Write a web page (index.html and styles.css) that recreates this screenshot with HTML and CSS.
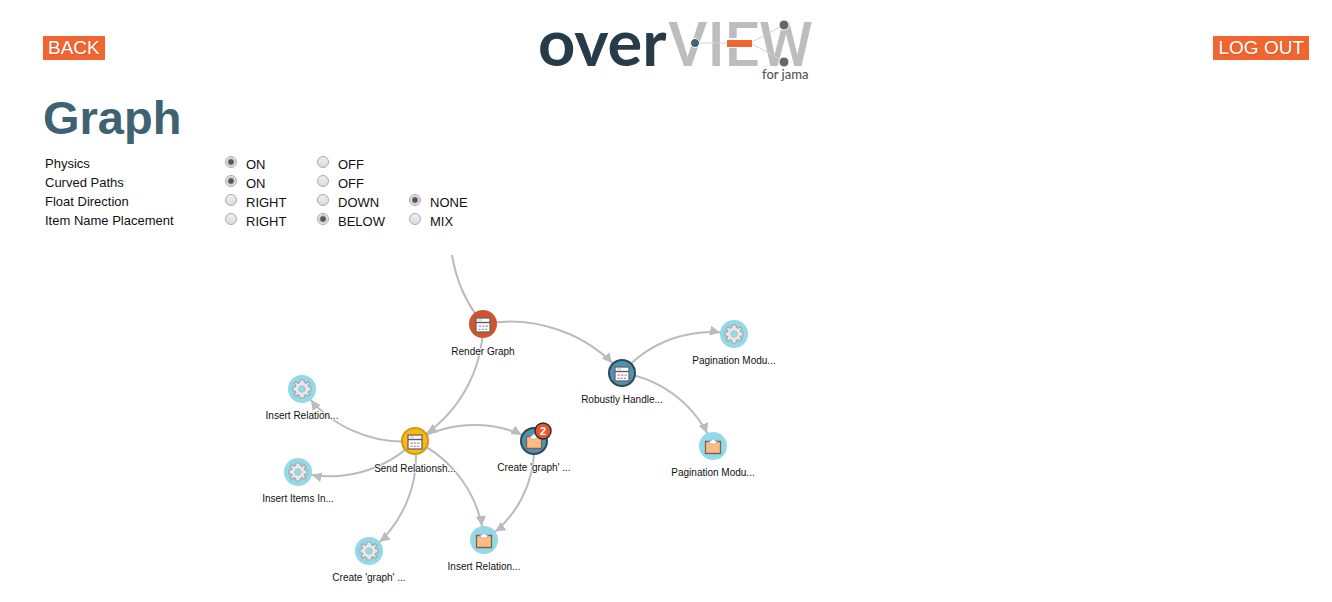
FILE: index.html
```html
<!DOCTYPE html>
<html lang="en">
<head>
<meta charset="utf-8">
<title>Graph - overVIEW for jama</title>
<link rel="stylesheet" href="styles.css">
</head>
<body>
<header class="topbar">
  <a class="action" href="#back">BACK</a>
  <svg class="logo" width="276" height="66" viewBox="0 0 276 66" role="img" aria-label="overVIEW for jama">
    <text class="logo-over" x="0" y="48">over</text>
    <text class="logo-view" x="130" y="48">VIEW</text>
    <path d="M161 25H190" stroke="#d2d2d2" fill="none"/>
    <rect x="188" y="20" width="31" height="10" fill="#fff"/>
    <path d="M214 24L242 9M214 26L242 41" stroke="#d2d2d2" fill="none"/>
    <rect x="189" y="22" width="25" height="7" fill="#f16530"/>
    <circle cx="157" cy="25" r="4.5" fill="#3e6271" stroke="#fff"/>
    <circle cx="246" cy="7" r="5" fill="#666" stroke="#fff"/>
    <circle cx="246" cy="44" r="5" fill="#666" stroke="#fff"/>
    <text class="logo-sub" x="224" y="61">for jama</text>
  </svg>
  <button class="action action-end" type="button">LOG OUT</button>
</header>
<main>
  <h1 class="title">Graph</h1>
  <form class="options">
    <div class="row" role="radiogroup" aria-labelledby="o1">
      <span id="o1">Physics</span>
      <label class="choice"><input type="radio" name="physics" checked><span>ON</span></label>
      <label class="choice"><input type="radio" name="physics"><span>OFF</span></label>
    </div>
    <div class="row" role="radiogroup" aria-labelledby="o2">
      <span id="o2">Curved Paths</span>
      <label class="choice"><input type="radio" name="curved" checked><span>ON</span></label>
      <label class="choice"><input type="radio" name="curved"><span>OFF</span></label>
    </div>
    <div class="row" role="radiogroup" aria-labelledby="o3">
      <span id="o3">Float Direction</span>
      <label class="choice"><input type="radio" name="float"><span>RIGHT</span></label>
      <label class="choice"><input type="radio" name="float"><span>DOWN</span></label>
      <label class="choice"><input type="radio" name="float" checked><span>NONE</span></label>
    </div>
    <div class="row" role="radiogroup" aria-labelledby="o4">
      <span id="o4">Item Name Placement</span>
      <label class="choice"><input type="radio" name="placement"><span>RIGHT</span></label>
      <label class="choice"><input type="radio" name="placement" checked><span>BELOW</span></label>
      <label class="choice"><input type="radio" name="placement"><span>MIX</span></label>
    </div>
  </form>
  <svg class="graph" height="340">
    <defs>
      <marker id="arrow" viewBox="0 -5 10 10" refX="24" refY="-1" markerWidth="10" markerHeight="10" markerUnits="userSpaceOnUse" orient="auto">
        <path d="M0-5L10 0L0 5Z" fill="#bbb"/>
      </marker>
      <g id="window">
        <rect x="-7" y="-6" width="14" height="14" fill="#fff" stroke="#6b6461" stroke-width="1.3"/>
        <path d="M-7-1.500H7" stroke="#5c5c60" stroke-width="1.4"/>
        <path d="M-5-4H-1" stroke="#b9aec0" stroke-width="1"/>
        <path d="M-4.500 2.200H5" stroke="#b58f9c" stroke-width="1.200" stroke-dasharray="2.500 1"/>
        <path d="M-4.500 5.300H5" stroke="#8f97a4" stroke-width="1.200" stroke-dasharray="2 1.200"/>
      </g>
      <g id="gear">
        <path d="M-2-9H2L2.500-6.500L4.300-5.700L6-7.500L8-5.500L6.200-3.500L6.800-2H9V2H6.800L6.200 3.500L8 5.500L6 7.500L4.300 5.700L2.500 6.500L2 9H-2L-2.500 6.500L-4.300 5.700L-6 7.500L-8 5.500L-6.200 3.500L-6.800 2H-9V-2H-6.800L-6.200-3.500L-8-5.500L-6-7.500L-4.300-5.700L-2.500-6.500Z" fill="#e8e8e8" stroke="#a3a8aa" stroke-width="1.200"/>
        <circle r="3.300" fill="#93d9e8" stroke="#b5c3c8"/>
      </g>
      <g id="clipboard">
        <path d="M-7.500-4.500H7.500V7.500H-7.500Z" fill="#ffbb82" stroke="#756657" stroke-width="1.300"/>
        <path d="M-4-5Q-3.500-2-1.500-2H1.500Q3.500-2 4-5L2-5L1-7H-1L-2-5Z" fill="#fff" stroke="#93a5a8" stroke-width=".7"/>
      </g>
    </defs>
    <g class="edges">
      <path class="open" d="M483 69A145 145 0 0 1 452 0"/>
      <path d="M483 69A148 148 0 0 1 622 118"/>
      <path d="M483 69A136 136 0 0 1 415 186"/>
      <path d="M622 118A119 119 0 0 1 734 79"/>
      <path d="M622 118A116 116 0 0 1 713 191"/>
      <path d="M415 186A124 124 0 0 1 302 134"/>
      <path d="M415 186A121 121 0 0 1 298 217"/>
      <path d="M415 186A119 119 0 0 1 369 296"/>
      <path d="M415 186A121 121 0 0 1 484 285"/>
      <path d="M415 186A119 119 0 0 1 534 186"/>
      <path d="M534 186A111 111 0 0 1 484 285"/>
    </g>
    <g transform="translate(483 69)"><circle r="14" fill="#cf532e"/><use href="#window"/><text class="name" y="31">Render Graph</text></g>
    <g transform="translate(622 118)"><circle class="ring-navy" r="13"/><use href="#window"/><text class="name" y="30">Robustly Handle...</text></g>
    <g transform="translate(734 79)"><circle class="item" r="14"/><use href="#gear"/><text class="name" y="30">Pagination Modu...</text></g>
    <g transform="translate(713 191)"><circle class="item" r="14"/><use href="#clipboard"/><text class="name" y="30">Pagination Modu...</text></g>
    <g transform="translate(302 134)"><circle class="item" r="14"/><use href="#gear"/><text class="name" y="30">Insert Relation...</text></g>
    <g transform="translate(298 217)"><circle class="item" r="14"/><use href="#gear"/><text class="name" y="30">Insert Items In...</text></g>
    <g transform="translate(415 186)"><circle class="ring-gold" r="13"/><use href="#window"/><text class="name" y="31">Send Relationsh...</text></g>
    <g transform="translate(369 296)"><circle class="item" r="14"/><use href="#gear"/><text class="name" y="30">Create 'graph' ...</text></g>
    <g transform="translate(484 285)"><circle class="item" r="14"/><use href="#clipboard"/><text class="name" y="30">Insert Relation...</text></g>
    <g transform="translate(534 186)"><circle class="ring-navy" r="13"/><use href="#clipboard"/><text class="name" y="30">Create 'graph' ...</text>
      <circle cx="9" cy="-10" r="8" fill="#e9562b" stroke="#33302f" stroke-width="1.500"/><text class="count" x="9" y="-6">2</text></g>
  </svg>
</main>
</body>
</html>
```

FILE: styles.css
```css
* { box-sizing: border-box; }

body {
  margin: 0;
  background: #fff;
  color: #111;
  font: 13px/19px "Liberation Sans", Arial, sans-serif;
}

.topbar {
  display: grid;
  grid-template-columns: 1fr auto 1fr;
  align-items: start;
  padding: 18px 23px 0 43px;
}

.action {
  justify-self: start;
  margin-top: 18px;
  padding: 0 5px;
  border: 0;
  background: #f16530;
  color: #fff;
  font: 19px/24px "Liberation Sans", Arial, sans-serif;
  text-decoration: none;
  text-shadow: 1px 1px 1px #d5592e;
}

.action-end { justify-self: end; }

.logo {
  display: block;
  overflow: visible;
}

.logo-over {
  font: bold 65px Lato, sans-serif;
  fill: #273b49;
}

.logo-view {
  font: 500 61px Roboto, sans-serif;
  fill: #bdbdbd;
}

.logo-sub {
  font: 500 13px Lato, sans-serif;
  fill: #555;
}

.title {
  margin: 6px 0 0 43px;
  color: #3e6271;
  font-size: 47px;
  line-height: 56px;
}

.options { padding: 8px 0 0 45px; }

.row {
  display: grid;
  grid-template-columns: 180px 92px 92px auto;
  height: 19px;
}

.choice {
  display: flex;
  gap: 8px;
  padding-top: 1px;
}

.choice input {
  appearance: none;
  flex: none;
  width: 12px;
  height: 12px;
  margin: 1px 1px 0 0;
  border: 1px solid #a9a9a9;
  border-radius: 50%;
  background: linear-gradient(#eee, #dcdcdc);
}

.choice input:checked {
  background: radial-gradient(circle, #555 0 2px, #e6e6e6 4px);
}

.graph {
  display: block;
  width: 100%;
  margin-top: 25px;
  overflow: hidden;
}

.edges path {
  fill: none;
  stroke: #bbb;
  stroke-width: 2px;
  marker-end: url(#arrow);
}

.edges .open { marker-end: none; }

.item { fill: #93d9e8; }

.ring-navy {
  fill: #4b94b5;
  stroke: #2f4858;
  stroke-width: 2px;
}

.ring-gold {
  fill: #fcb817;
  stroke: #cf9a1c;
  stroke-width: 2px;
}

.name {
  font: 10px "Liberation Sans", Arial, sans-serif;
  text-anchor: middle;
  fill: #111;
  stroke: #fff;
  stroke-width: 2px;
  stroke-opacity: .7;
  paint-order: stroke;
}

.count {
  font: bold 11px "Liberation Sans", Arial, sans-serif;
  text-anchor: middle;
  fill: #fff;
}
```
